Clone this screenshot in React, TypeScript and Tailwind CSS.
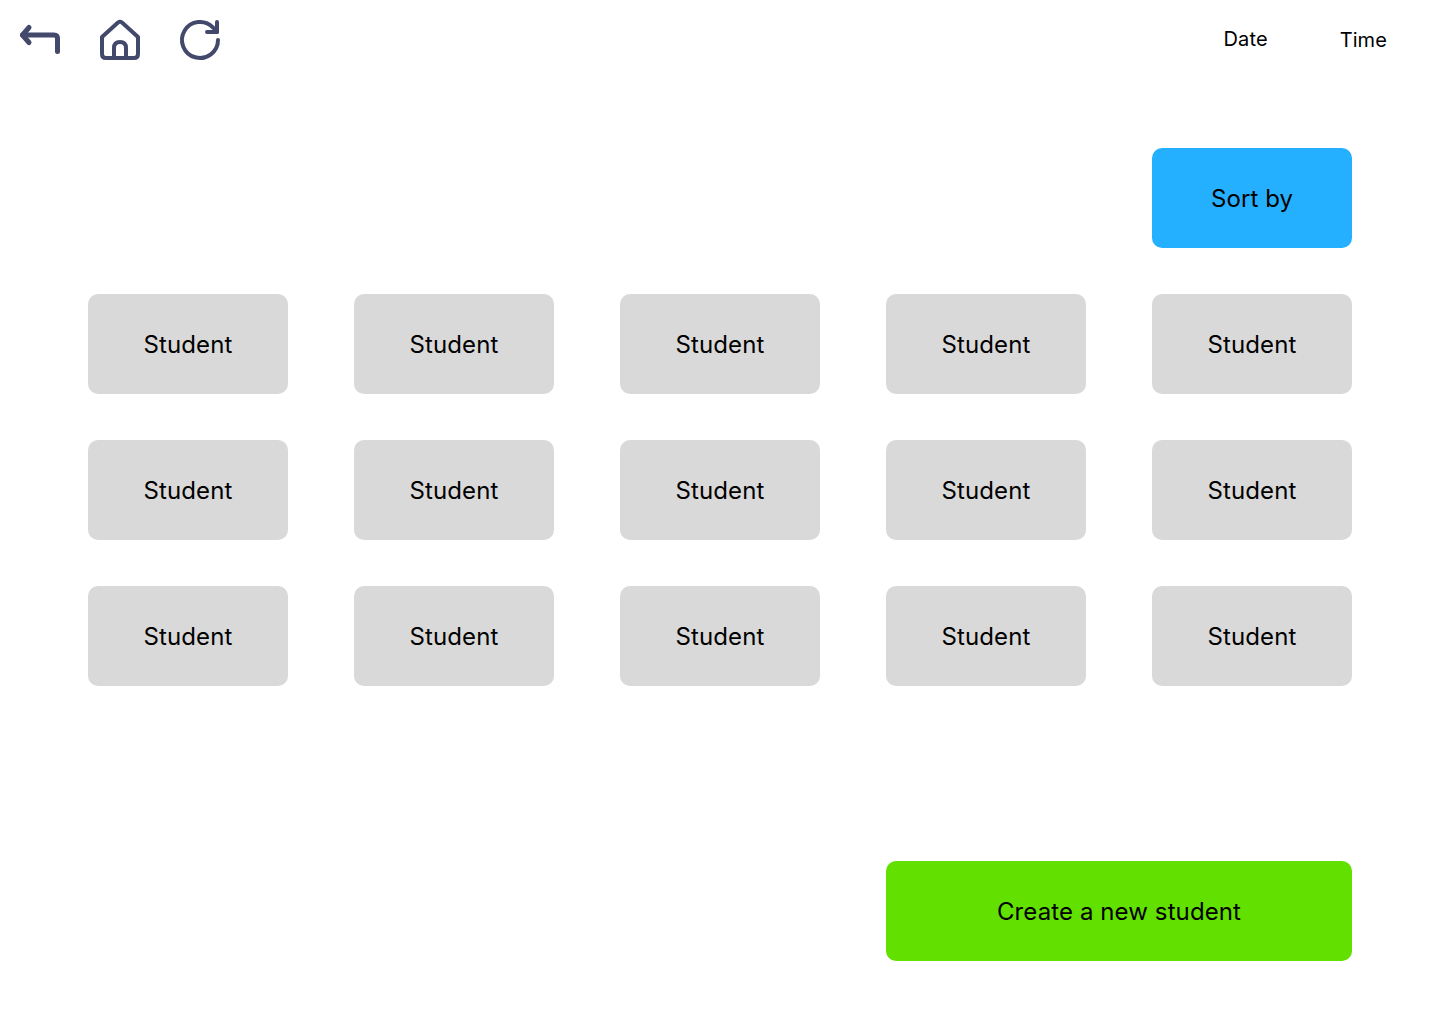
import React from "react";

const rows = [0, 1, 2];
const cols = [0, 1, 2, 3, 4];

function BackIcon() {
  return (
    <svg width="48" height="48" viewBox="0 0 48 48" fill="none" stroke="#42496B" strokeWidth="5" strokeLinecap="round" strokeLinejoin="round">
      <path d="M13 11.5 L6.5 19 L13 26.5" />
      <path d="M6.5 19 H38 Q41.5 19 41.5 22.5 V35.5" />
    </svg>
  );
}

function HomeIcon() {
  return (
    <svg width="48" height="48" viewBox="0 0 48 48" fill="none" stroke="#42496B" strokeWidth="4" strokeLinecap="round" strokeLinejoin="round">
      <path d="M6 21 L22 6.5 Q24 5 26 6.5 L42 21 V38 Q42 42 38 42 H10 Q6 42 6 38 Z" />
      <path d="M18 42 V32 Q18 26 24 26 Q30 26 30 32 V42" />
    </svg>
  );
}

function RefreshIcon() {
  return (
    <svg width="48" height="48" viewBox="0 0 48 48" fill="none" stroke="#42496B" strokeWidth="4" strokeLinecap="round" strokeLinejoin="round">
      <path d="M42 24 A18 18 0 1 1 37 11.5 L41 16" />
      <path d="M41 6 V16 H31" />
    </svg>
  );
}

export default function App() {
  return (
    <div className="w-[1440px] h-[1024px] bg-white font-['Inter',sans-serif] font-[380] text-black tracking-[0.1px]">
      <header className="h-20 flex items-center pl-4 pr-[53px]">
        <div className="flex gap-8">
          <BackIcon />
          <HomeIcon />
          <RefreshIcon />
        </div>
        <div className="ml-auto flex items-center gap-[72px] text-[20px]">
          <span className="mb-[2px]">Date</span>
          <span>Time</span>
        </div>
      </header>

      <main className="px-[88px] pt-[68px]">
        <div className="flex justify-end">
          <button className="w-[200px] h-[100px] pt-[2px] rounded-[10px] bg-[#25B0FF] text-[24px]">Sort by</button>
        </div>

        <div className="mt-[46px] grid grid-cols-5 gap-x-[66px] gap-y-[46px]">
          {rows.map((r) =>
            cols.map((c) => (
              <button key={`${r}-${c}`} className="h-[100px] pt-[2px] rounded-[10px] bg-[#D9D9D9] text-[24px]">
                Student
              </button>
            ))
          )}
        </div>

        <div className="mt-[175px] flex justify-end">
          <button className="w-[466px] h-[100px] pt-[2px] rounded-[10px] bg-[#62E000] text-[24px]">Create a new student</button>
        </div>
      </main>
    </div>
  );
}
